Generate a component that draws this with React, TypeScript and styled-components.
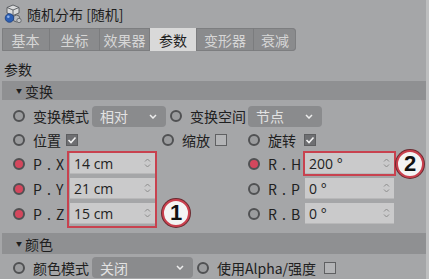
import React from 'react';
import styled, { createGlobalStyle } from 'styled-components';

const Global = createGlobalStyle`
  html, body { margin: 0; padding: 0; background: #bdbebf; }
  body {
    width: 429px; height: 279px; overflow: hidden;
    font-family: "Noto Sans CJK SC", "Noto Sans", sans-serif;
  }
`;

const Panel = styled.div`
  position: relative;
  width: 426px;
  height: 279px;
  background: #a5a6a8;
  overflow: hidden;
  font-size: 14px;
  color: #242424;
`;

const Header = styled.div`
  height: 28px;
  display: flex;
  align-items: center;
  gap: 5px;
  padding-left: 4px;
  color: #1d1d1d;
  font-size: 14px;
`;

const TabBar = styled.div`
  display: inline-flex;
  margin-left: 2px;
  height: 23px;
  background: #8a8b8d;
  border-radius: 1px 4px 4px 1px;
  overflow: hidden;
  box-shadow: inset 0 0 0 1px #7d7e80;
`;

const Tab = styled.div<{ $w: number; $active?: boolean }>`
  width: ${p => p.$w}px;
  display: flex;
  align-items: center;
  justify-content: center;
  font-size: 14px;
  color: ${p => (p.$active ? '#1e1e1e' : '#d6d6d6')};
  background: ${p => (p.$active ? '#d9d9d9' : 'transparent')};
  border-right: 1px solid #7b7c7e;
  box-sizing: border-box;
  &:last-child { border-right: none; }
`;

const GroupTitle = styled.div`
  height: 30px;
  display: flex;
  align-items: center;
  padding: 5px 0 0 4px;
  box-sizing: border-box;
  font-size: 14px;
  color: #1c1c1c;
`;

const SectionBand = styled.div<{ $h: number }>`
  height: ${p => p.$h}px;
  margin-left: 2px;
  background: #8f9092;
  display: flex;
  align-items: center;
  padding-left: 14px;
  gap: 3px;
  font-size: 14px;
  color: #1e1e1e;
`;

const Caret = styled.span`
  font-size: 6px;
  line-height: 1;
`;

const Row = styled.div<{ $h: number }>`
  height: ${p => p.$h}px;
  display: flex;
  align-items: center;
  padding-left: 13px;
`;

const Group = styled.div<{ $w?: number }>`
  display: flex;
  align-items: center;
  flex: none;
  width: ${p => (p.$w ? `${p.$w}px` : 'auto')};
`;

const Radio = styled.span<{ $red?: boolean }>`
  flex: none;
  width: 12px;
  height: 12px;
  border-radius: 50%;
  box-sizing: border-box;
  border: 2px solid #505153;
  background: ${p => (p.$red ? '#d4475d' : '#9b9c9e')};
`;

const Label = styled.span<{ $w?: number; $spaced?: boolean }>`
  margin-left: 8px;
  flex: none;
  width: ${p => (p.$w ? `${p.$w}px` : 'auto')};
  white-space: nowrap;
  letter-spacing: ${p => (p.$spaced ? '1px' : '0')};
  color: #202020;
`;

const Dropdown = styled.div<{ $w: number }>`
  width: ${p => p.$w}px;
  height: 21px;
  box-sizing: border-box;
  background: #8a8b8d;
  border-radius: 4px;
  display: flex;
  align-items: center;
  justify-content: space-between;
  padding: 0 9px 0 8px;
  color: #e2e2e2;
  font-size: 14px;
`;

const Field = styled.div<{ $w: number; $mark?: boolean }>`
  width: ${p => p.$w}px;
  height: 21px;
  box-sizing: border-box;
  background: #cacacb;
  border-bottom: 1px solid #b8b8b9;
  display: flex;
  align-items: center;
  justify-content: space-between;
  padding: 0 4px 0 4px;
  font-family: "Open Sans", "Noto Sans", sans-serif;
  font-size: 14px;
  color: #222;
  box-shadow: ${p => (p.$mark ? '0 0 0 2px #c8424f' : 'none')};
`;

const Check = styled.span<{ $on?: boolean; $gap?: number }>`
  flex: none;
  margin-left: ${p => p.$gap ?? 5}px;
  width: 12px;
  height: 12px;
  box-sizing: border-box;
  border: 1px solid ${p => (p.$on ? '#5d5e60' : '#5f6062')};
  background: ${p => (p.$on ? '#6e6f72' : '#b3b4b6')};
  display: flex;
  align-items: center;
  justify-content: center;
`;

const MarkBox = styled.div`
  position: absolute;
  left: 67px;
  top: 151px;
  width: 90px;
  height: 77px;
  box-sizing: border-box;
  border: 2px solid #c8424f;
  pointer-events: none;
`;

const Badge = styled.div<{ $x: number; $y: number }>`
  position: absolute;
  left: ${p => p.$x}px;
  top: ${p => p.$y}px;
  width: 28px;
  height: 28px;
  box-sizing: border-box;
  border-radius: 50%;
  background: #f4f4f4;
  border: 2px solid #c9404e;
  box-shadow: 0 0 0 1px #6a2a30;
  display: flex;
  align-items: center;
  justify-content: center;
  font-family: "Liberation Sans", "Noto Sans", sans-serif;
  font-weight: bold;
  font-size: 22px;
  color: #111;
`;

const Chevron = () => (
  <svg width="8" height="5" viewBox="0 0 8 5">
    <path d="M1 1 L4 4 L7 1" fill="none" stroke="#ededed" strokeWidth="1.5" />
  </svg>
);

const Spinner = () => (
  <svg width="7" height="12" viewBox="0 0 7 12">
    <path d="M1 4.5 L3.5 2 L6 4.5 M1 7.5 L3.5 10 L6 7.5" fill="none" stroke="#8c8c8c" strokeWidth="1" />
  </svg>
);

const Tick = () => (
  <svg width="10" height="10" viewBox="0 0 10 10">
    <path d="M1.5 5 L4 7.5 L8.5 2.5" fill="none" stroke="#f2f2f2" strokeWidth="1.6" />
  </svg>
);

const ObjIcon = () => (
  <svg width="18" height="20" viewBox="0 0 18 20">
    <path d="M9 1 L15 3.5 L15 9 L9 11.5 L3 9 L3 3.5 Z" fill="#d9dadb" stroke="#55585c" strokeWidth="0.9" />
    <path d="M3 3.5 L9 6 L15 3.5 M9 6 L9 11.5" fill="none" stroke="#55585c" strokeWidth="0.9" />
    <circle cx="12.5" cy="14.5" r="3.4" fill="#b9bbbe" stroke="#5b5e62" strokeWidth="0.9" />
    <circle cx="15" cy="16.5" r="2.2" fill="#c4c6c9" stroke="#5b5e62" strokeWidth="0.8" />
    <circle cx="5.5" cy="14" r="4.3" fill="#2c5fb4" stroke="#1b3e7c" strokeWidth="0.8" />
    <circle cx="4.3" cy="12.7" r="1.3" fill="#8fb3ea" />
  </svg>
);

const tabs: { t: string; w: number; active?: boolean }[] = [
  { t: '基本', w: 48 },
  { t: '坐标', w: 50 },
  { t: '效果器', w: 50 },
  { t: '参数', w: 47, active: true },
  { t: '变形器', w: 57 },
  { t: '衰减', w: 42 },
];

const pRows = [
  { l: 'P . X', v: '14 cm', r: 'R . H', rv: '200 °', h: 25, mark: true },
  { l: 'P . Y', v: '21 cm', r: 'R . P', rv: '0 °', h: 25 },
  { l: 'P . Z', v: '15 cm', r: 'R . B', rv: '0 °', h: 25 },
];

export default function App() {
  return (
    <Panel>
      <Global />
      <Header>
        <ObjIcon />
        <span>随机分布 [随机]</span>
      </Header>
      <TabBar>
        {tabs.map(t => (
          <Tab key={t.t} $w={t.w} $active={t.active}>{t.t}</Tab>
        ))}
      </TabBar>
      <GroupTitle>参数</GroupTitle>
      <SectionBand $h={19}><Caret>▼</Caret>变换</SectionBand>

      <Row $h={4} />
      <Row $h={24}>
        <Group $w={157}>
          <Radio />
          <Label $w={59}>变换模式</Label>
          <Dropdown $w={74}>相对<Chevron /></Dropdown>
        </Group>
        <Group>
          <Radio />
          <Label $w={58}>变换空间</Label>
          <Dropdown $w={74}>节点<Chevron /></Dropdown>
        </Group>
      </Row>
      <Row $h={23}>
        <Group $w={149}>
          <Radio />
          <Label>位置</Label>
          <Check $on><Tick /></Check>
        </Group>
        <Group $w={86}>
          <Radio />
          <Label>缩放</Label>
          <Check />
        </Group>
        <Group>
          <Radio />
          <Label>旋转</Label>
          <Check $on $gap={8}><Tick /></Check>
        </Group>
      </Row>
      {pRows.map(r => (
        <Row $h={r.h} key={r.l}>
          <Group $w={235}>
            <Radio $red />
            <Label $w={37} $spaced>{r.l}</Label>
            <Field $w={85}>{r.v}<Spinner /></Field>
          </Group>
          <Group>
            <Radio $red={!!r.mark} />
            <Label $w={37} $spaced>{r.r}</Label>
            <Field $w={89} $mark={r.mark}>{r.rv}<Spinner /></Field>
          </Group>
        </Row>
      ))}
      <Row $h={7} />
      <SectionBand $h={21}><Caret>▼</Caret>颜色</SectionBand>
      <Row $h={27}>
        <Group $w={184}>
          <Radio />
          <Label $w={59}>颜色模式</Label>
          <Dropdown $w={101}>关闭<Chevron /></Dropdown>
        </Group>
        <Group>
          <Radio />
          <Label>使用Alpha/强度</Label>
          <Check $gap={8} />
        </Group>
      </Row>

      <MarkBox />
      <Badge $x={162} $y={199}>1</Badge>
      <Badge $x={396} $y={150}>2</Badge>
    </Panel>
  );
}
